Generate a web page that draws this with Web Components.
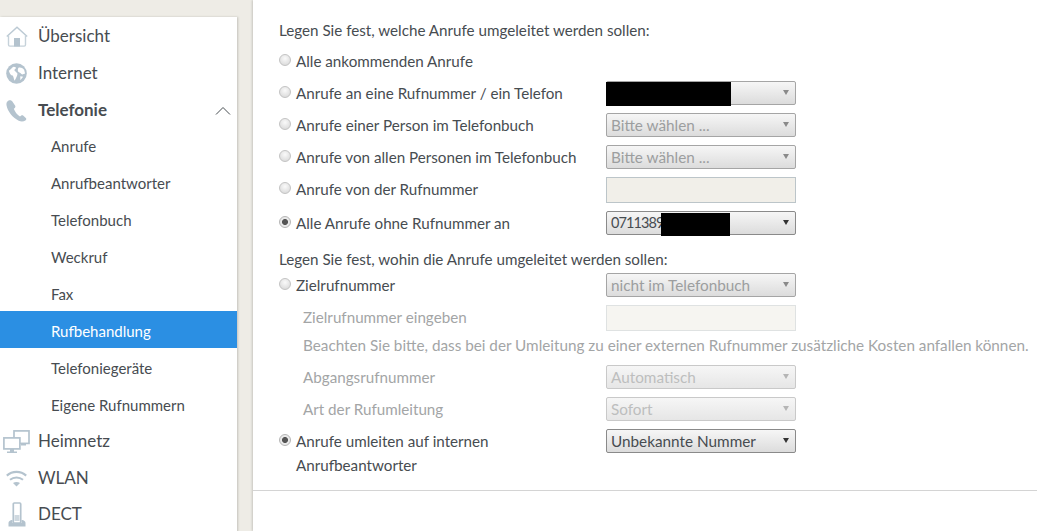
<!DOCTYPE html>
<html lang="de">
<head>
<meta charset="utf-8">
<title>Rufbehandlung</title>
<style>
html, body { margin: 0; height: 100%; overflow: hidden; }
body {
    background: #eeece6;
    font: 15.2px/1.2 Lato, "Liberation Sans", sans-serif;
    color: #474c51;
}
</style>
</head>
<body>
<fb-page>
    <fb-sidebar slot="side">
        <fb-nav-item icon="home">Übersicht</fb-nav-item>
        <fb-nav-item icon="globe">Internet</fb-nav-item>
        <fb-nav-item icon="phone" open>Telefonie</fb-nav-item>
        <fb-nav-item sub>Anrufe</fb-nav-item>
        <fb-nav-item sub>Anrufbeantworter</fb-nav-item>
        <fb-nav-item sub>Telefonbuch</fb-nav-item>
        <fb-nav-item sub>Weckruf</fb-nav-item>
        <fb-nav-item sub>Fax</fb-nav-item>
        <fb-nav-item sub active>Rufbehandlung</fb-nav-item>
        <fb-nav-item sub>Telefoniegeräte</fb-nav-item>
        <fb-nav-item sub>Eigene Rufnummern</fb-nav-item>
        <fb-nav-item icon="net" style="padding-top:2px">Heimnetz</fb-nav-item>
        <fb-nav-item icon="wifi" style="padding-top:2px">WLAN</fb-nav-item>
        <fb-nav-item icon="dect">DECT</fb-nav-item>
    </fb-sidebar>

    <fb-line h="30">Legen Sie fest, welche Anrufe umgeleitet werden sollen:</fb-line>
    <fb-row radio>Alle ankommenden Anrufe</fb-row>
    <fb-row radio>Anrufe an eine Rufnummer / ein Telefon
        <fb-select slot="control" tone="dim"><fb-redact x="-1" y="0" w="125" h="24"></fb-redact></fb-select>
    </fb-row>
    <fb-row radio>Anrufe einer Person im Telefonbuch
        <fb-select slot="control" tone="dim">Bitte wählen ...</fb-select>
    </fb-row>
    <fb-row radio>Anrufe von allen Personen im Telefonbuch
        <fb-select slot="control" tone="dim">Bitte wählen ...</fb-select>
    </fb-row>
    <fb-row radio>Anrufe von der Rufnummer
        <fb-input slot="control"></fb-input>
    </fb-row>
    <fb-row radio checked style="margin-top:2px">Alle Anrufe ohne Rufnummer an
        <fb-select slot="control"><span style="font-size:14.5px;letter-spacing:-.9px">0711389</span><fb-redact x="54" y="1" w="69" h="23"></fb-redact></fb-select>
    </fb-row>

    <fb-line h="20" style="margin-top:10px">Legen Sie fest, wohin die Anrufe umgeleitet werden sollen:</fb-line>
    <fb-row radio>Zielrufnummer
        <fb-select slot="control" tone="dim">nicht im Telefonbuch</fb-select>
    </fb-row>
    <fb-row indent disabled>Zielrufnummer eingeben
        <fb-input slot="control" faint></fb-input>
    </fb-row>
    <fb-line h="24" indent disabled style="font-size:15.28px">Beachten Sie bitte, dass bei der Umleitung zu einer externen Rufnummer zusätzliche Kosten anfallen können.</fb-line>
    <fb-row indent disabled style="margin-top:4px">Abgangsrufnummer
        <fb-select slot="control" tone="faint">Automatisch</fb-select>
    </fb-row>
    <fb-row indent disabled>Art der Rufumleitung
        <fb-select slot="control" tone="faint">Sofort</fb-select>
    </fb-row>
    <fb-row radio checked tall>Anrufe umleiten auf internen<br>Anrufbeantworter
        <fb-select slot="control">Unbekannte Nummer</fb-select>
    </fb-row>
    <fb-rule></fb-rule>
</fb-page>

<script>
const ICONS = {
    home: `<svg width="22" height="21" viewBox="0 0 22 21"><path d="M.8 10.500 11 1.300l10.200 9.200" fill="none" stroke="#bccad4" stroke-width="1.500"/><path d="M2.500 9.500v9.300c0 .8.500 1.300 1.300 1.300h14.400c.8 0 1.300-.5 1.300-1.300V9.500" fill="none" stroke="#c6d2da" stroke-width="1.400"/><rect x="8" y="12" width="6" height="8.500" fill="#b4c3ce"/></svg>`,
    globe: `<svg width="21" height="21" viewBox="0 0 22 22"><circle cx="11" cy="11" r="10.800" fill="#b4c3ce"/><path d="M3 8c2-1 3-3 5-4 2 0 3 1 2 2-2 1-1 2 0 3l2 2c0 2-1 4-3 7.500-1-2-1-4.500-2-5.500-2 0-3-2-4-5zM13 5c2-1 4 0 6 2l1 4-3 1c-2-1-2-2-3-2-2-1-2-3-1-5zM15 14l3 .5-3 3.500z" fill="#fff"/></svg>`,
    phone: `<svg width="21" height="22" viewBox="0 0 21 22"><path d="M2.600.5C.9 1.300.2 3 .5 5.200c1 6 5.800 12 12.200 15.500 2.300 1.100 4.800 1 6.700-.2 1-.7 1.200-1.800.4-2.600l-2.400-2.200c-.7-.6-1.700-.6-2.400 0l-1 .8c-2.800-1.700-5-4.600-6.200-7.700l1-.9c.6-.6.800-1.400.4-2.100L6.200 1.300C5.600.3 3.800-.1 2.600.5z" fill="#b4c3ce"/></svg>`,
    net: `<svg width="27" height="24" viewBox="0 0 27 24"><g fill="none" stroke="#b4c3ce" stroke-width="1.700"><rect x="11" y=".9" width="15" height="12.500"/><rect x=".9" y="7.900" width="16" height="11" fill="#fff"/></g><path d="M7 19h4v2.500h3V23H4v-1.500h3zM18 13h5v2.500h-5z" fill="#b4c3ce"/></svg>`,
    wifi: `<svg width="21" height="17" viewBox="0 0 21 17"><g fill="none" stroke="#b4c3ce" stroke-width="2.100"><path d="M.8 5.600c5.600-5 13.800-5 19.400 0"/><path d="M4 9.800c3.800-3.100 9.200-3.100 13 0"/></g><path d="M7 13c2-1.500 5-1.500 7 0l-3.500 3.500z" fill="#b4c3ce"/></svg>`,
    dect: `<svg width="18" height="25" viewBox="0 0 18 25"><rect x="5.300" y="1" width="7.400" height="20" rx="1" fill="#fff" stroke="#b4c3ce" stroke-width="1.700"/><path d="M6.500 13h5v6h-5z" fill="#cfd9e0"/><path d="M.5 24.500v-3.500c0-1.500 1-2.500 3-3h1v3h9v-3h1c2 .5 3 1.500 3 3v3.500z" fill="#b4c3ce"/></svg>`
}

customElements.define('fb-page', class extends HTMLElement {
    constructor() {
        super()
        this.attachShadow({ mode: 'open' }).innerHTML = `
        <style>
            :host { display: flex; height: 531px; overflow: hidden; }
            aside { width: 237px; padding-top: 17px; flex: none; box-sizing: border-box; }
            main {
                margin-left: 16px; flex: 1; background: #fff;
                box-shadow: -1px 0 2px #c8c6c0;
                padding-top: 15px;
                display: flex; flex-direction: column;
            }
        </style>
        <aside><slot name="side"></slot></aside>
        <main><slot></slot></main>`
    }
})

customElements.define('fb-sidebar', class extends HTMLElement {
    constructor() {
        super()
        this.attachShadow({ mode: 'open' }).innerHTML = `
        <style>
            :host {
                display: block; background: #fff; height: 514px; padding-top: 1px;
                box-shadow: 1px 0 2px #c4c2bc;
            }
        </style>
        <slot></slot>`
    }
})

customElements.define('fb-nav-item', class extends HTMLElement {
    constructor() {
        super()
        const icon = ICONS[this.getAttribute('icon')] || ''
        const chevron = this.hasAttribute('open')
            ? `<svg class="chev" width="16" height="9" viewBox="0 0 16 9"><path d="M1 8.500 8 1.500l7 7" fill="none" stroke="#474c51" stroke-width="1"/></svg>` : ''
        this.attachShadow({ mode: 'open' }).innerHTML = `
        <style>
            :host {
                display: flex; align-items: center; height: 37px; box-sizing: border-box;
                font-size: 17px; color: #474c51;
            }
            :host([sub]) { font-size: 15px; padding-left: 51px; padding-top: 2px; }
            :host([active]) { background: #2b8fe3; color: #fff; }
            :host([open]) { font-weight: 700; height: 34px; padding-top: 3px; }
            .icon { width: 38px; display: flex; justify-content: center; flex: none; padding-right: 5px; box-sizing: border-box; }
            .text { flex: 1; }
            .chev { margin-right: 6px; }
        </style>
        ${icon ? `<span class="icon">${icon}</span>` : ''}
        <span class="text"><slot></slot></span>
        ${chevron}`
    }
})

customElements.define('fb-line', class extends HTMLElement {
    constructor() {
        super()
        this.attachShadow({ mode: 'open' }).innerHTML = `
        <style>
            :host {
                display: flex; align-items: center; padding-left: 26px;
                height: calc(var(--h) * 1px); white-space: nowrap;
            }
            :host([indent]) { padding-left: 50px; }
            :host([disabled]) { color: #a3a5a6; }
        </style>
        <slot></slot>`
        this.style.setProperty('--h', this.getAttribute('h'))
    }
})

customElements.define('fb-row', class extends HTMLElement {
    constructor() {
        super()
        const radio = this.hasAttribute('radio')
        this.attachShadow({ mode: 'open' }).innerHTML = `
        <style>
            :host {
                display: grid; grid-template-columns: 327px 190px; align-items: center;
                padding-left: 26px; height: 32px; box-sizing: border-box;
            }
            :host([indent]) { grid-template-columns: 303px 190px; padding-left: 50px; }
            :host([disabled]) { color: #a3a5a6; }
            :host([tall]) { height: 52px; align-items: start; padding-top: 4px; line-height: 24px; }
            .label { display: flex; align-items: center; }
            :host([tall]) .label { align-items: start; }
            .radio {
                width: 10px; height: 10px; border-radius: 50%; margin-right: 5px; flex: none;
                border: 1px solid #c3c3c3; position: relative; top: -1px; box-sizing: content-box;
                background: radial-gradient(circle at 50% 35%, #fafafa, #d4d4d4);
            }
            :host([tall]) .radio { top: 5px; }
            :host([checked]) .radio { background: radial-gradient(circle, #555 0 2.600px, #e9e9e9 3.400px); border-color: #b5b5b5; }
        </style>
        <div class="label">${radio ? '<span class="radio"></span>' : ''}<span><slot></slot></span></div>
        <slot name="control"></slot>`
    }
})

customElements.define('fb-select', class extends HTMLElement {
    constructor() {
        super()
        this.attachShadow({ mode: 'open' }).innerHTML = `
        <style>
            :host {
                display: flex; align-items: center; position: relative;
                height: 24px; width: 190px; box-sizing: border-box;
                padding-left: 4px; color: #474c51; font-size: 15.300px;
                border: 1px solid #8a8a8a; border-radius: 2px;
                background: linear-gradient(#f6f6f6, #dcdcdc);
                white-space: nowrap;
            }
            :host([tone="dim"]) { color: #9c9e9f; border-color: #a5a5a5; }
            :host([tone="faint"]) { color: #bdbebe; border-color: #c9c9c9; background: linear-gradient(#f6f6f6, #e6e6e6); }
            i {
                position: absolute; right: 6px; top: 8px;
                border: 3px solid transparent; border-top: 5.500px solid #333; border-bottom: 0;
            }
            :host([tone="dim"]) i { border-top-color: #8a8a8a; }
            :host([tone="faint"]) i { border-top-color: #b5b5b5; }
        </style>
        <slot></slot><i></i>`
    }
})

customElements.define('fb-input', class extends HTMLElement {
    constructor() {
        super()
        this.attachShadow({ mode: 'open' }).innerHTML = `
        <style>
            :host {
                display: block; height: 26px; width: 190px; box-sizing: border-box;
                margin-top: 2px;
                background: #f1efe9; border: 1px solid #bcc5c9;
            }
            :host([faint]) { background: #f6f5f1; border-color: #dfe2e2; }
        </style>`
    }
})

// black bars over the private numbers
customElements.define('fb-redact', class extends HTMLElement {
    constructor() {
        super()
        this.attachShadow({ mode: 'open' }).innerHTML = `
        <style>
            :host { position: absolute; background: #000; }
        </style>`
        this.style.left = this.getAttribute('x') + 'px'
        this.style.top = this.getAttribute('y') + 'px'
        this.style.width = this.getAttribute('w') + 'px'
        this.style.height = this.getAttribute('h') + 'px'
    }
})

customElements.define('fb-rule', class extends HTMLElement {
    constructor() {
        super()
        this.attachShadow({ mode: 'open' }).innerHTML = `
        <style>
            :host { display: block; margin-top: 13px; border-top: 1px solid #d4d4d4; }
        </style>`
    }
})
</script>
</body>
</html>
